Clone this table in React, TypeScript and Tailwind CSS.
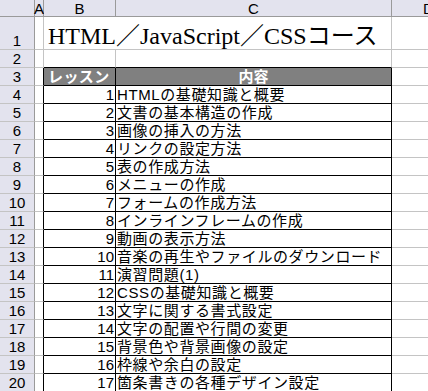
const lessons = [
  "HTMLの基礎知識と概要",
  "文書の基本構造の作成",
  "画像の挿入の方法",
  "リンクの設定方法",
  "表の作成方法",
  "メニューの作成",
  "フォームの作成方法",
  "インラインフレームの作成",
  "動画の表示方法",
  "音楽の再生やファイルのダウンロード",
  "演習問題(1)",
  "CSSの基礎知識と概要",
  "文字に関する書式設定",
  "文字の配置や行間の変更",
  "背景色や背景画像の設定",
  "枠線や余白の設定",
  "箇条書きの各種デザイン設定",
];

const font = { fontFamily: '"Liberation Sans", "Noto Sans CJK JP", sans-serif' };

const RowHead = ({ n, h }: { n: number; h: string }) => (
  <div className={`w-[35px] shrink-0 ${h} bg-[#e3e3ee] border-r border-b border-r-[#9a9a9a] border-b-[#c4c4c4] flex items-end justify-center text-[15px] leading-[17px] text-black`}>
    {n}
  </div>
);

export default function App() {
  return (
    <div className="w-[428px] h-[391px] overflow-hidden bg-white select-none" style={font}>
      {/* column headers */}
      <div className="flex h-[17px]">
        <div className="w-[35px] shrink-0 bg-[#e3e3ee] border-r border-b border-[#9a9a9a]" />
        <div className="w-[9px] shrink-0 bg-[#e3e3ee] border-r border-b border-[#9a9a9a] flex items-center justify-center text-[15px] leading-none">A</div>
        <div className="w-[72px] shrink-0 bg-[#e3e3ee] border-r border-b border-[#9a9a9a] flex items-center justify-center text-[15px] leading-none">B</div>
        <div className="w-[276px] shrink-0 bg-[#e3e3ee] border-r border-b border-[#9a9a9a] flex items-center justify-center text-[15px] leading-none">C</div>
        <div className="flex-1 bg-[#e3e3ee] border-b border-[#9a9a9a] overflow-hidden flex items-center pl-[31px] text-[15px] leading-none">D</div>
      </div>

      {/* row 1: title */}
      <div className="flex h-[33px]">
        <RowHead n={1} h="h-[33px]" />
        <div className="w-[9px] shrink-0 border-r border-b border-[#c4c4c4]" />
        <div className="w-[348px] shrink-0 border-r border-b border-[#c4c4c4] relative">
          <span
            className="absolute left-[4px] bottom-[1px] whitespace-nowrap text-[24px] leading-none text-black"
            style={{ fontFamily: '"Liberation Serif", "Noto Sans CJK JP", serif' }}
          >
            HTML／JavaScript／CSSコース
          </span>
        </div>
        <div className="flex-1 border-b border-[#c4c4c4]" />
      </div>

      {/* row 2 */}
      <div className="flex h-[18px]">
        <RowHead n={2} h="h-[18px]" />
        <div className="w-[9px] shrink-0 border-r border-b border-[#c4c4c4]" />
        <div className="w-[72px] shrink-0 border-r border-b border-r-[#c4c4c4] border-b-black" />
        <div className="w-[276px] shrink-0 border-r border-b border-r-[#c4c4c4] border-b-black" />
        <div className="flex-1 border-b border-[#c4c4c4]" />
      </div>

      {/* row 3: table header */}
      <div className="flex h-[18px]">
        <RowHead n={3} h="h-[18px]" />
        <div className="w-[9px] shrink-0 border-r border-b border-r-black border-b-[#c4c4c4]" />
        <div className="w-[72px] shrink-0 border-r border-b border-black bg-[#808080] flex items-end pl-[4px] text-white font-bold text-[15px] leading-[17px] tracking-[0.4px]">
          レッスン
        </div>
        <div className="w-[276px] shrink-0 border-r border-b border-black bg-[#808080] flex items-end justify-center text-white font-bold text-[15px] leading-[17px]">
          内容
        </div>
        <div className="flex-1 border-b border-[#c4c4c4]" />
      </div>

      {lessons.map((title, i) => (
        <div key={i} className="flex h-[18px]">
          <RowHead n={i + 4} h="h-[18px]" />
          <div className="w-[9px] shrink-0 border-r border-b border-r-black border-b-[#c4c4c4]" />
          <div className="w-[72px] shrink-0 border-r border-b border-black flex items-end justify-end pr-[1px] text-[15px] leading-[17px] text-black">
            {i + 1}
          </div>
          <div className="w-[276px] shrink-0 border-r border-b border-black flex items-end pl-[1px] text-[15px] leading-[17px] tracking-[0.6px] text-black whitespace-nowrap overflow-hidden">
            {title}
          </div>
          <div className="flex-1 border-b border-[#c4c4c4]" />
        </div>
      ))}
    </div>
  );
}
